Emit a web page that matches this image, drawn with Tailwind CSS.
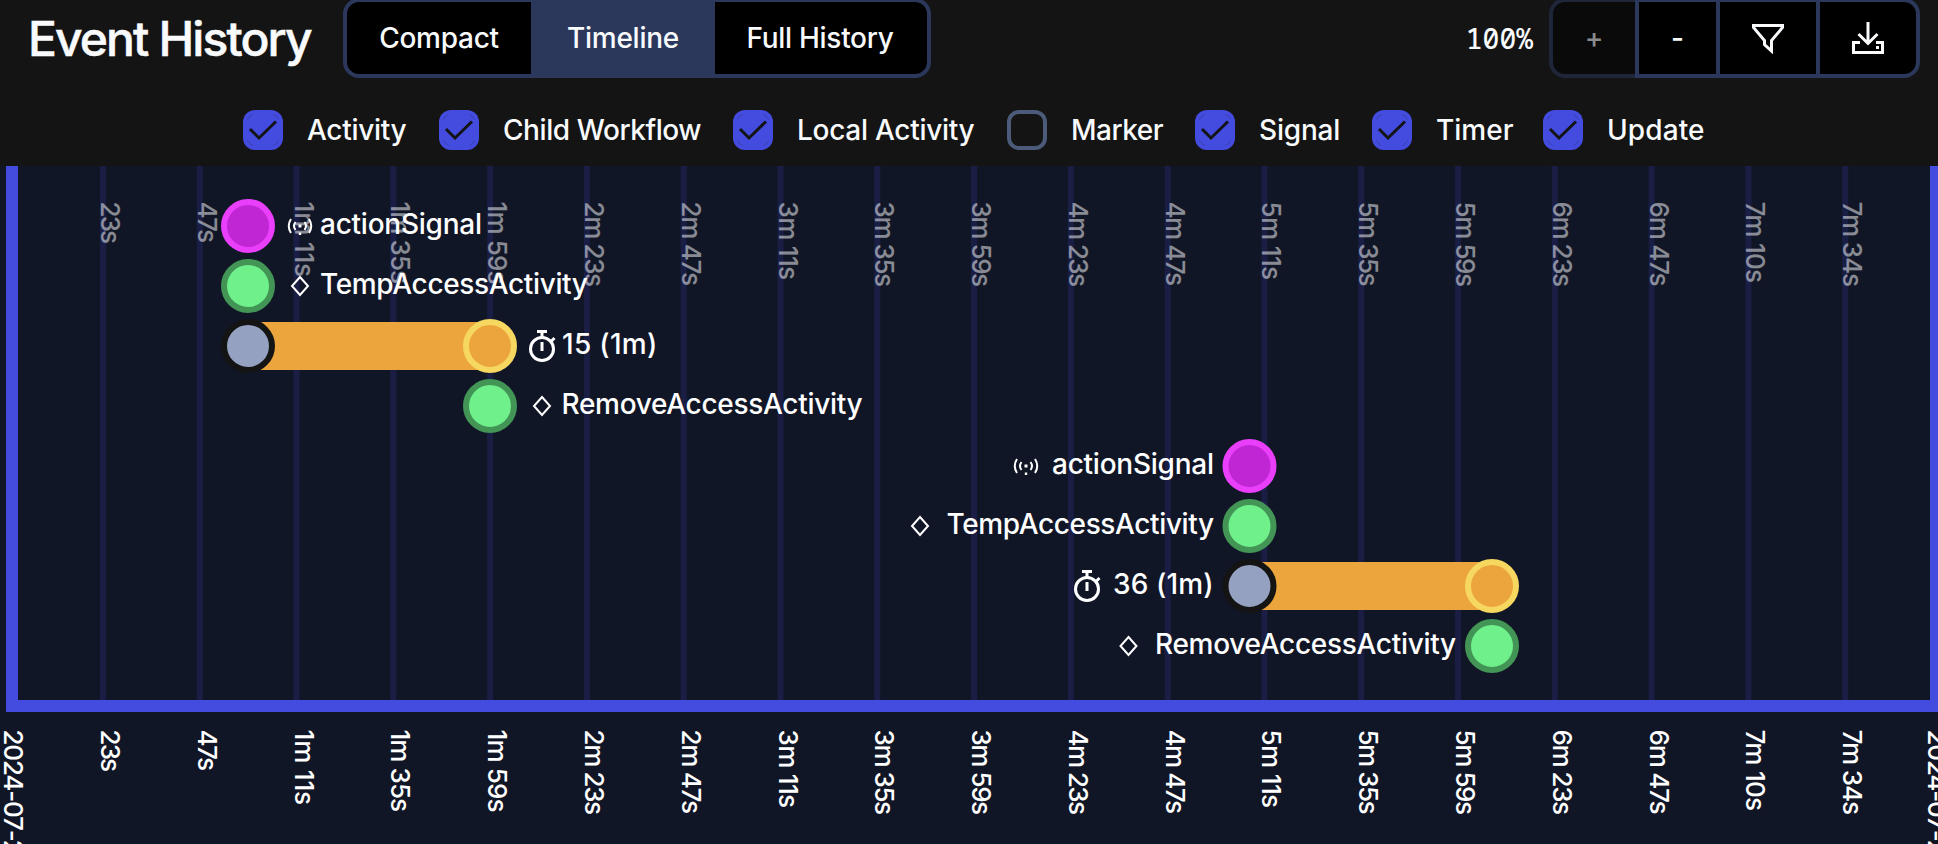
<!DOCTYPE html>
<html lang="en">
<head>
<meta charset="utf-8">
<title>Event History</title>
<script src="https://cdn.jsdelivr.net/npm/@tailwindcss/browser@4"></script>
</head>
<body class="w-[1938px] h-[844px] overflow-hidden bg-[#141414] text-[#f8fafc] font-['Inter',sans-serif]">
<header class="flex h-[78px] items-start justify-between pl-7 pr-[18px]">
  <div class="flex items-start">
    <h1 class="w-[315px] pt-[11px] text-[48px] leading-[56px] font-medium tracking-[-1.9px] whitespace-nowrap [-webkit-text-stroke:0.5px_#f8fafc]">Event History</h1>
    <div class="-mt-0.5 flex h-20 w-[588px] overflow-hidden rounded-2xl border-4 border-[#2b385c] bg-black text-[28px] font-medium tracking-[-0.28px]">
      <button class="w-[184px]">Compact</button>
      <button class="w-[184px] bg-[#2b385c]">Timeline</button>
      <button class="flex-1 pr-0.5">Full History</button>
    </div>
  </div>
  <div class="flex items-start">
    <span class="pt-[18px] pr-4 font-['Noto_Sans_Mono','DejaVu_Sans_Mono',monospace] text-[28px] leading-[40px] font-medium">100%</span>
    <div class="-mt-0.5 flex h-20 text-[28px] font-medium">
      <button class="w-[86px] rounded-l-2xl border-y-4 border-l-4 border-[#1f263a] bg-[#0a0a0a] text-[#8a8b8c]">+</button>
      <button class="w-[81px] border-y-4 border-l-4 border-[#2b385c] bg-black">-</button>
      <button class="flex w-[100px] items-center justify-center border-y-4 border-l-4 border-[#2b385c] bg-black">
        <svg class="size-8" viewBox="0 0 32 32" fill="none" stroke="#f8fafc" stroke-width="3"><path d="M1.500 3.500H30.500V5.500L19.500 18.500V29L12.500 22.500V18.500L1.500 5.500Z"/></svg>
      </button>
      <button class="flex w-[104px] items-center justify-center rounded-r-2xl border-4 border-[#2b385c] bg-black">
        <svg class="size-8" viewBox="0 0 32 32" fill="none" stroke="#f8fafc" stroke-width="3"><path d="M16 0V21M6.500 12L16 21.500L25.500 12M8 20.500H1.500V30.500H30.500V20.500H24"/><path d="M24 25.500h3"/></svg>
      </button>
    </div>
  </div>
</header>
<div id="filters" class="flex h-[88px] items-start pt-8 pl-[243px] text-[28px] leading-10 font-medium whitespace-nowrap"></div>
<svg id="chart" class="block h-[678px] w-[1938px] bg-[#111627]" viewBox="0 166 1938 678" font-family="Inter, sans-serif" fill="#ffffff"></svg>
<script>
// name, cell width, letter spacing
const filters = [["Activity",196,-.3],["Child Workflow",294,-.43],["Local Activity",274,-.28],["Marker",188,-.5],["Signal",177,-.2],["Timer",171,0],["Update",200,.1]];
document.getElementById('filters').innerHTML = filters.map(([n,w,ls]) =>
 `<label class="flex shrink-0 items-center gap-6" style="width:${w}px;letter-spacing:${ls}px">` +
 (n === 'Marker'
  ? `<span class="size-10 shrink-0 rounded-xl border-4 border-[#4b5b79]"></span>`
  : `<svg class="size-10 shrink-0" viewBox="0 0 40 40" fill="none"><rect width="40" height="40" rx="12" fill="#444ce0"/><path d="M4.500 9.500Q6 6 9.500 4.500M30.500 4.500Q34 6 35.500 9.500M4.500 30.500Q6 34 9.500 35.500M30.500 35.500Q34 34 35.500 30.500" stroke="#333a9a" stroke-width=".7"/><path d="M7 19L16 28L33 11.500" stroke="#141414" stroke-width="3"/></svg>`) +
 `<span>${n}</span></label>`).join('');

// tick label, drawn length
const times = [["23s",40],["47s",39],["1m 11s",73],["1m 35s",80],["1m 59s",80.5],["2m 23s",83],["2m 47s",82],["3m 11s",76],["3m 35s",83],["3m 59s",83],["4m 23s",83],["4m 47s",82],["5m 11s",76],["5m 35s",82.5],["5m 59s",83],["6m 23s",83],["6m 47s",82.5],["7m 10s",79],["7m 34s",83]];
const step = 96.79, x0 = 6.2;
let s = '';
times.forEach((t,i) => { const x = x0 + step*(i+1); s += `<path d="M${x} 166V700" stroke="#1a1e45" stroke-width="6"/>`; });
s += `<path d="M12 166V706H1936V166" fill="none" stroke="#444ce0" stroke-width="12"/>`;
const vt = (t,len,x,y,o) => `<text transform="translate(${x} ${y}) rotate(90)" font-size="26" font-weight="500" opacity="${o}" textLength="${len+2.6}">${t}</text>`;
times.forEach(([t,l],i) => { const x = x0 + step*(i+1) - 2; s += vt(t,l,x,201.5,.5) + vt(t,l,x,729.5,1); });
[4.2, 1928].forEach(x => { s += `<text transform="translate(${x} 729.5) rotate(90)" font-size="26" font-weight="500" letter-spacing="-1.2">2024-07-2</text>`; });
const dot = (x,y,f,b) => `<circle cx="${x}" cy="${y}" r="24" fill="${f}" stroke="${b}" stroke-width="6"/>`;
const pink = ['#c026d3','#e93ffb'], green = ['#6ff08b','#439556'], grey = ['#94a1c0','#141414'], gold = ['#eca53c','#f6d860'];
const icons = {
 signal: `<path d="M-9 -7Q-13.500 0 -9 7M9 -7Q13.500 0 9 7M-4.500 -4Q-7.500 0 -4.500 4M4.500 -4Q7.500 0 4.500 4" fill="none" stroke="#fff" stroke-width="2"/><path d="M-1.500 -1.500h3v3h-3zM-1.200 6.500h2.400v2.400h-2.400z"/>`,
 diamond: `<path d="M0 -9L8 0L0 9L-8 0Z" fill="none" stroke="#fff" stroke-width="2"/>`,
 timer: `<circle cx="0" cy="3" r="11.500" fill="none" stroke="#fff" stroke-width="3"/><path d="M-5 -14.500H5M0 -14V-9M9 -4.500L12.500 -8M0 -4V5" fill="none" stroke="#fff" stroke-width="3"/>`
};
const label = (t,x,y,ls,ic,ix,iy) => `<g transform="translate(${ix} ${iy})">${icons[ic]}</g><text x="${x}" y="${y}" font-size="28" font-weight="500" letter-spacing="${ls}">${t}</text>`;
const bar = (a,b,y) => `<rect x="${a}" y="${y-24}" width="${b-a}" height="48" fill="#eca53c"/>` + dot(a,y,...grey) + dot(b,y,...gold);
s += dot(248,226,...pink) + dot(248,286,...green) + bar(248,490,346) + dot(490,406,...green);
s += dot(1249.5,466,...pink) + dot(1249.5,526,...green) + bar(1249.5,1492,586) + dot(1492,646,...green);
s += label('actionSignal',320,234,-.25,'signal',300,226)
 + label('TempAccessActivity',320,294,-.36,'diamond',300,286)
 + label('15 (1m)',562,354,.3,'timer',542,346)
 + label('RemoveAccessActivity',561.5,414,-.3,'diamond',542,406)
 + label('actionSignal',1052,474,-.25,'signal',1026,466)
 + label('TempAccessActivity',946.5,534,-.38,'diamond',920,526)
 + label('36 (1m)',1113,594,.15,'timer',1087,586)
 + label('RemoveAccessActivity',1155,654,-.3,'diamond',1128.5,646);
document.getElementById('chart').innerHTML = s;
</script>
</body>
</html>
